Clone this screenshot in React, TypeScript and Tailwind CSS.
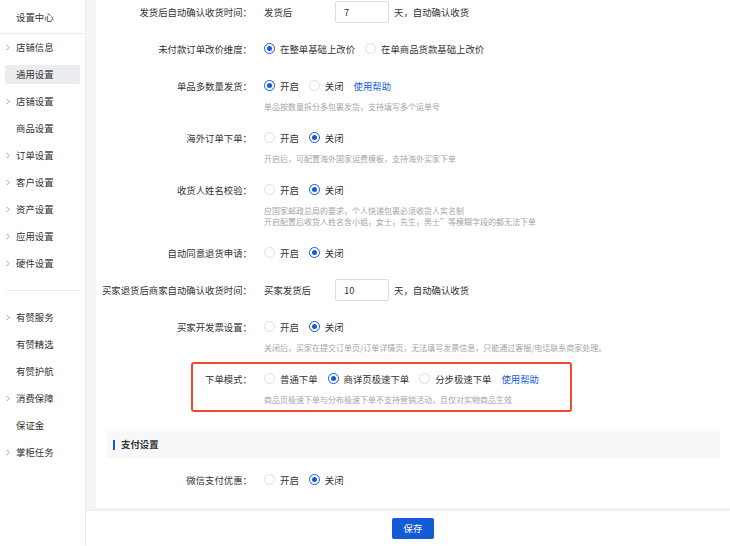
const font = { fontFamily: '"Noto Sans CJK SC", "Noto Sans", sans-serif' };

type NavItem = { label: string; arrow?: boolean; active?: boolean } | "divider";

const nav: NavItem[] = [
  { label: "店铺信息", arrow: true },
  { label: "通用设置", active: true },
  { label: "店铺设置", arrow: true },
  { label: "商品设置" },
  { label: "订单设置", arrow: true },
  { label: "客户设置", arrow: true },
  { label: "资产设置", arrow: true },
  { label: "应用设置", arrow: true },
  { label: "硬件设置", arrow: true },
  "divider",
  { label: "有赞服务", arrow: true },
  { label: "有赞精选" },
  { label: "有赞护航" },
  { label: "消费保障", arrow: true },
  { label: "保证金" },
  { label: "掌柜任务", arrow: true },
];

function Chevron() {
  return (
    <svg width="4" height="7" viewBox="0 0 4 7" fill="none">
      <path d="M0.5 0.8L3.2 3.5L0.5 6.2" stroke="#969799" strokeWidth="0.9" />
    </svg>
  );
}

function Sidebar() {
  return (
    <div className="w-[86px] shrink-0 border-r border-[#ebedf0] bg-white">
      <div className="flex h-[34px] items-center border-b border-[#ebedf0] pl-[16px] pt-[1px] text-[9.4px] text-[#323233]">
        设置中心
      </div>
      {nav.map((item, i) =>
        item === "divider" ? (
          <div key={i} className="flex h-[27px] items-center px-[5px] pb-[1px]">
            <div className="h-px w-full bg-[#ebedf0]" />
          </div>
        ) : (
          <div key={i} className="h-[27px] px-[5px] py-[4px]">
            <div
              className={`flex h-[19px] items-center rounded-[2px] text-[9.4px] text-[#323233] ${
                item.active ? "bg-[#ebedf0]" : ""
              }`}
            >
              <span className="flex w-[11px] items-center pl-[1px]">{item.arrow && <Chevron />}</span>
              {item.label}
            </div>
          </div>
        )
      )}
    </div>
  );
}

function Radio({ checked, label }: { checked?: boolean; label: string }) {
  return (
    <span className="flex items-center gap-[5px]">
      <span
        className={`flex h-[11px] w-[11px] items-center justify-center rounded-full border bg-white ${
          checked ? "border-[#155bd4]" : "border-[#dcdee0]"
        }`}
      >
        {checked && <span className="h-[5px] w-[5px] rounded-full bg-[#155bd4]" />}
      </span>
      <span>{label}</span>
    </span>
  );
}

function Row({ label, help, children }: { label: string; help?: string[]; children: React.ReactNode }) {
  return (
    <div className="flex">
      <div className="flex h-[22px] w-[145px] shrink-0 items-center justify-end whitespace-nowrap text-[#323233]">
        {label}
      </div>
      <div className="ml-[12px] flex flex-col">
        <div className="flex h-[22px] items-center gap-[10px] whitespace-nowrap text-[#323233]">{children}</div>
        {help && (
          <div className="mt-[4px] text-[8px] leading-[11px] text-[#a3a5a8]">
            {help.map((h) => (
              <div key={h}>{h}</div>
            ))}
          </div>
        )}
      </div>
    </div>
  );
}

function DaysInput({ prefix, value }: { prefix: string; value: string }) {
  return (
    <div className="flex items-center">
      <span className="w-[71px]">{prefix}</span>
      <div className="flex h-[22px] w-[54px] items-center rounded-[2px] border border-[#dcdee0] pl-[8px]">{value}</div>
      <span className="ml-[5px]">天，自动确认收货</span>
    </div>
  );
}

const Help = () => <span className="text-[#155bd4]">使用帮助</span>;

export default function App() {
  return (
    <div className="flex h-[546px] w-[730px] overflow-hidden bg-[#f4f5f7] text-[9.4px]" style={font}>
      <Sidebar />
      <div className="flex min-w-0 flex-1 flex-col">
        <div className="flex-1 overflow-hidden pb-[3px] pl-[10px]">
          <div className="h-full bg-white pl-[11px] pr-[10px] pt-[1px]">
            <div className="flex flex-col gap-[15px]">
              <Row label="发货后自动确认收货时间：">
                <DaysInput prefix="发货后" value="7" />
              </Row>
              <Row label="未付款订单改价维度：">
                <Radio checked label="在整单基础上改价" />
                <Radio label="在单商品货款基础上改价" />
              </Row>
              <Row label="单品多数量发货：" help={["单品按数量拆分多包裹发货，支持填写多个运单号"]}>
                <Radio checked label="开启" />
                <Radio label="关闭" />
                <Help />
              </Row>
              <Row label="海外订单下单：" help={["开启后，可配置海外国家运费模板，支持海外买家下单"]}>
                <Radio label="开启" />
                <Radio checked label="关闭" />
              </Row>
              <Row
                label="收货人姓名校验："
                help={[
                  "应国家邮政总局的要求，个人快递包裹必须收货人实名制",
                  "开启配置后收货人姓名含小姐，女士，先生，男士”等模糊字段的都无法下单",
                ]}
              >
                <Radio label="开启" />
                <Radio checked label="关闭" />
              </Row>
              <Row label="自动同意退货申请：">
                <Radio label="开启" />
                <Radio checked label="关闭" />
              </Row>
              <Row label="买家退货后商家自动确认收货时间：">
                <DaysInput prefix="买家发货后" value="10" />
              </Row>
              <Row
                label="买家开发票设置："
                help={["关闭后，买家在提交订单页/订单详情页，无法填写发票信息，只能通过客服/电话联系商家处理。"]}
              >
                <Radio label="开启" />
                <Radio checked label="关闭" />
              </Row>
              <div className="relative">
                <Row label="下单模式：" help={["商品页极速下单与分布极速下单不支持营销活动，且仅对实物商品生效"]}>
                  <Radio label="普通下单" />
                  <Radio checked label="商详页极速下单" />
                  <Radio label="分步极速下单" />
                  <Help />
                </Row>
                <div className="absolute -top-[6px] left-[84px] h-[50px] w-[381px] rounded-[3px] border-2 border-[#f04a2c]" />
              </div>
            </div>
            <div className="mt-[26px] flex h-[27px] items-center bg-[#f7f8fa] pl-[6px]">
              <span className="h-[10px] w-[2px] bg-[#155bd4]" />
              <span className="ml-[6px] font-bold text-[#323233]">支付设置</span>
            </div>
            <div className="mt-[11px]">
              <Row label="微信支付优惠：">
                <Radio label="开启" />
                <Radio checked label="关闭" />
              </Row>
            </div>
          </div>
        </div>
        <div className="flex h-[35px] shrink-0 items-center justify-center bg-white pl-[10px] shadow-[0_-1px_2px_rgba(0,0,0,0.04)]">
          <button className="flex h-[21px] w-[42px] items-center justify-center rounded-[2px] bg-[#155bd4] text-[9.4px] text-white">
            保存
          </button>
        </div>
      </div>
    </div>
  );
}
